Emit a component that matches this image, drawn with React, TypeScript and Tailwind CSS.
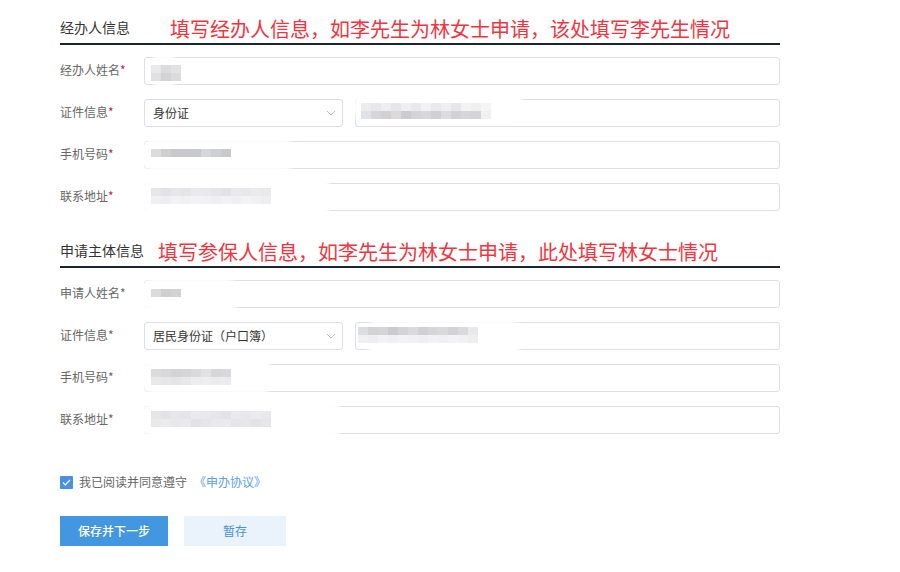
import React from "react";

const FONT = { fontFamily: '"Noto Sans CJK SC", "Noto Sans", sans-serif' };

type Blot = { l: number; t: number; w: number; h: number; ml: number; mt: number; cols: string[][] };

function Mosaic({ b }: { b: Blot }) {
  return (
    <>
      <div
        className="absolute bg-white rounded-[14px] blur-[1.5px]"
        style={{ left: b.l, top: b.t, width: b.w, height: b.h }}
      />
      <div className="absolute flex flex-col blur-[0.5px]" style={{ left: b.ml, top: b.mt }}>
        {b.cols.map((row, i) => (
          <div key={i} className="flex">
            {row.map((c, j) => (
              <div key={j} className="w-[10px] h-[8px]" style={{ background: c }} />
            ))}
          </div>
        ))}
      </div>
    </>
  );
}

function Field({ children, blot }: { children?: React.ReactNode; blot?: Blot }) {
  return (
    <div className="relative flex-1 h-[28px] border border-[#dcdfe6] rounded-[3px] bg-white flex items-center px-[9px] text-[12px] text-[#333]">
      {children}
      {blot && <Mosaic b={blot} />}
    </div>
  );
}

function Select({ value }: { value: string }) {
  return (
    <div className="w-[199px] h-[28px] border border-[#dcdfe6] rounded-[3px] bg-white flex items-center justify-between pl-[8px] pr-[6px] text-[12px] text-[#333] shrink-0">
      <span>{value}</span>
      <svg width="10" height="6" viewBox="0 0 10 6" fill="none">
        <path d="M1 1l4 4 4-4" stroke="#b8bfcc" strokeWidth="1" />
      </svg>
    </div>
  );
}

function Row({ label, red, children }: { label: string; red?: boolean; children: React.ReactNode }) {
  return (
    <div className="flex items-center h-[28px]">
      <div className="w-[84px] shrink-0 text-[12px] text-[#666] -mt-[3px]">
        {label}
        <span className={red ? "text-[#c2185b]" : "text-[#666]"}>*</span>
      </div>
      <div className="flex-1 flex items-center gap-[12px]">{children}</div>
    </div>
  );
}

function Header({ title, note, gap }: { title: string; note: string; gap: string }) {
  return (
    <div className="flex items-center h-[30px] border-b-2 border-[#1c2331]">
      <span className="text-[14px] text-[#333] -mt-[3px]">{title}</span>
      <span className={`text-[20px] text-[#f2343e] leading-none ${gap}`}>{note}</span>
    </div>
  );
}

const light = ["#e6e6ea", "#e3e3e6", "#e7e7ea", "#e5e4e8", "#eaeaed", "#e9e8ec", "#e6e6e9", "#e4e2e6", "#eaeaec", "#e8e8eb", "#ebebee", "#e9e9ec"];
const lighter = ["#f0f0f3", "#eeeef2", "#f2f2f5", "#f0f0f4", "#f3f3f6", "#f1f1f4", "#efeff3", "#f2f2f4", "#f0f0f2", "#f3f3f5", "#f1f1f3", "#eeeef1"];
const mid = ["#dcdde0", "#d2d2d4", "#d5d5d7", "#cbcbce", "#d4d4d6", "#d9dadc", "#d0d0d3", "#d6d6d8"];
const idTop = ["#ececee", "#e8e8ea", "#eeeeef", "#e6e6e8", "#efefef", "#e9e9eb", "#f2f2f2", "#eaeaec", "#edeff0", "#e7e7e9", "#f3f3f3", "#efefef", "#f5f5f5"];
const idBot = ["#dfe2e8", "#d6d6d8", "#d1d1d3", "#dcdbda", "#ccccd0", "#d4d4d6", "#d8d8da", "#d0d0d3", "#dcdcdc", "#d2d2d4", "#d7d7d9", "#d5d5d6", "#f0f0f0"];

export default function App() {
  return (
    <div className="w-[900px] h-[572px] bg-white relative" style={FONT}>
      <div className="ml-[60px] w-[720px] pt-[15px]">
        <Header title="经办人信息" note="填写经办人信息，如李先生为林女士申请，该处填写李先生情况" gap="ml-[40px]" />
        <div className="mt-[12px] flex flex-col gap-[14px]">
          <Row label="经办人姓名" red>
            <Field
              blot={{ l: 2, t: -2, w: 34, h: 30, ml: 6, mt: 7, cols: [["#e8e8ea", "#dcdcdd", "#e2e2e4"], ["#e0e0e2", "#d3d3d5", "#dbdbdd"]] }}
            />
          </Row>
          <Row label="证件信息" red>
            <Select value="身份证" />
            <Field
              blot={{ l: -2, t: -7, w: 170, h: 32, ml: 5, mt: 3, cols: [idTop, idBot] }}
            />
          </Row>
          <Row label="手机号码" red>
            <Field
              blot={{ l: -5, t: -2, w: 158, h: 30, ml: 6, mt: 7, cols: [["#dcdcdd", "#cfcfd0", "#c8c8ca", "#c8c8ca", "#c9c9cb", "#d5d8db", "#cfcfd1", "#c7c9cc"]] }}
            />
          </Row>
          <Row label="联系地址" red>
            <Field
              blot={{ l: -5, t: -4, w: 194, h: 34, ml: 6, mt: 4, cols: [light, lighter] }}
            />
          </Row>
        </div>
      </div>

      <div className="ml-[60px] w-[720px] mt-[27px]">
        <Header title="申请主体信息" note="填写参保人信息，如李先生为林女士申请，此处填写林女士情况" gap="ml-[14px]" />
        <div className="mt-[12px] flex flex-col gap-[14px]">
          <Row label="申请人姓名">
            <Field
              blot={{ l: -5, t: -2, w: 100, h: 32, ml: 6, mt: 8, cols: [["#dcdcdc", "#cfcfd0", "#d3d3d3"]] }}
            />
          </Row>
          <Row label="证件信息">
            <Select value="居民身份证（户口簿）" />
            <Field
              blot={{ l: 8, t: -2, w: 160, h: 32, ml: 2, mt: 4, cols: [mid.concat(["#d9d9db", "#d3d3d5", "#dadada", "#e8e8ea"]), lighter] }}
            />
          </Row>
          <Row label="手机号码">
            <Field
              blot={{ l: -5, t: -4, w: 135, h: 32, ml: 6, mt: 4, cols: [["#dcdcdd", "#d8d8da", "#d3d3d5", "#d6d6d8", "#dadadc", "#e2e2e4", "#d6d6d8", "#d9d9db"], ["#e8e8ea", "#e6e6e8", "#e4e4e6", "#e8e8ea", "#ededef", "#eeeef0", "#ebebed", "#ececee"]] }}
            />
          </Row>
          <Row label="联系地址">
            <Field
              blot={{ l: -5, t: -3, w: 205, h: 32, ml: 6, mt: 4, cols: [light, light.slice().reverse()] }}
            />
          </Row>
        </div>
      </div>

      <div className="ml-[60px] mt-[41px] flex items-center h-[14px]">
        <div className="w-[13px] h-[13px] bg-[#4a90e2] flex items-center justify-center rounded-[1px]">
          <svg width="9" height="7" viewBox="0 0 9 7" fill="none">
            <path d="M1 3.5l2.3 2.3L8 1" stroke="white" strokeWidth="1.2" />
          </svg>
        </div>
        <span className="ml-[6px] text-[12px] text-[#666]">我已阅读并同意遵守</span>
        <span className="ml-[7px] text-[12px] text-[#5b9ee8]">《申办协议》</span>
      </div>

      <div className="ml-[60px] mt-[27px] flex gap-[16px]">
        <button className="w-[108px] h-[30px] bg-[#4297e0] text-white text-[12px] font-medium">保存并下一步</button>
        <button className="w-[102px] h-[30px] bg-[#eaf3fb] text-[#4a90d9] text-[12px]">暂存</button>
      </div>
    </div>
  );
}
